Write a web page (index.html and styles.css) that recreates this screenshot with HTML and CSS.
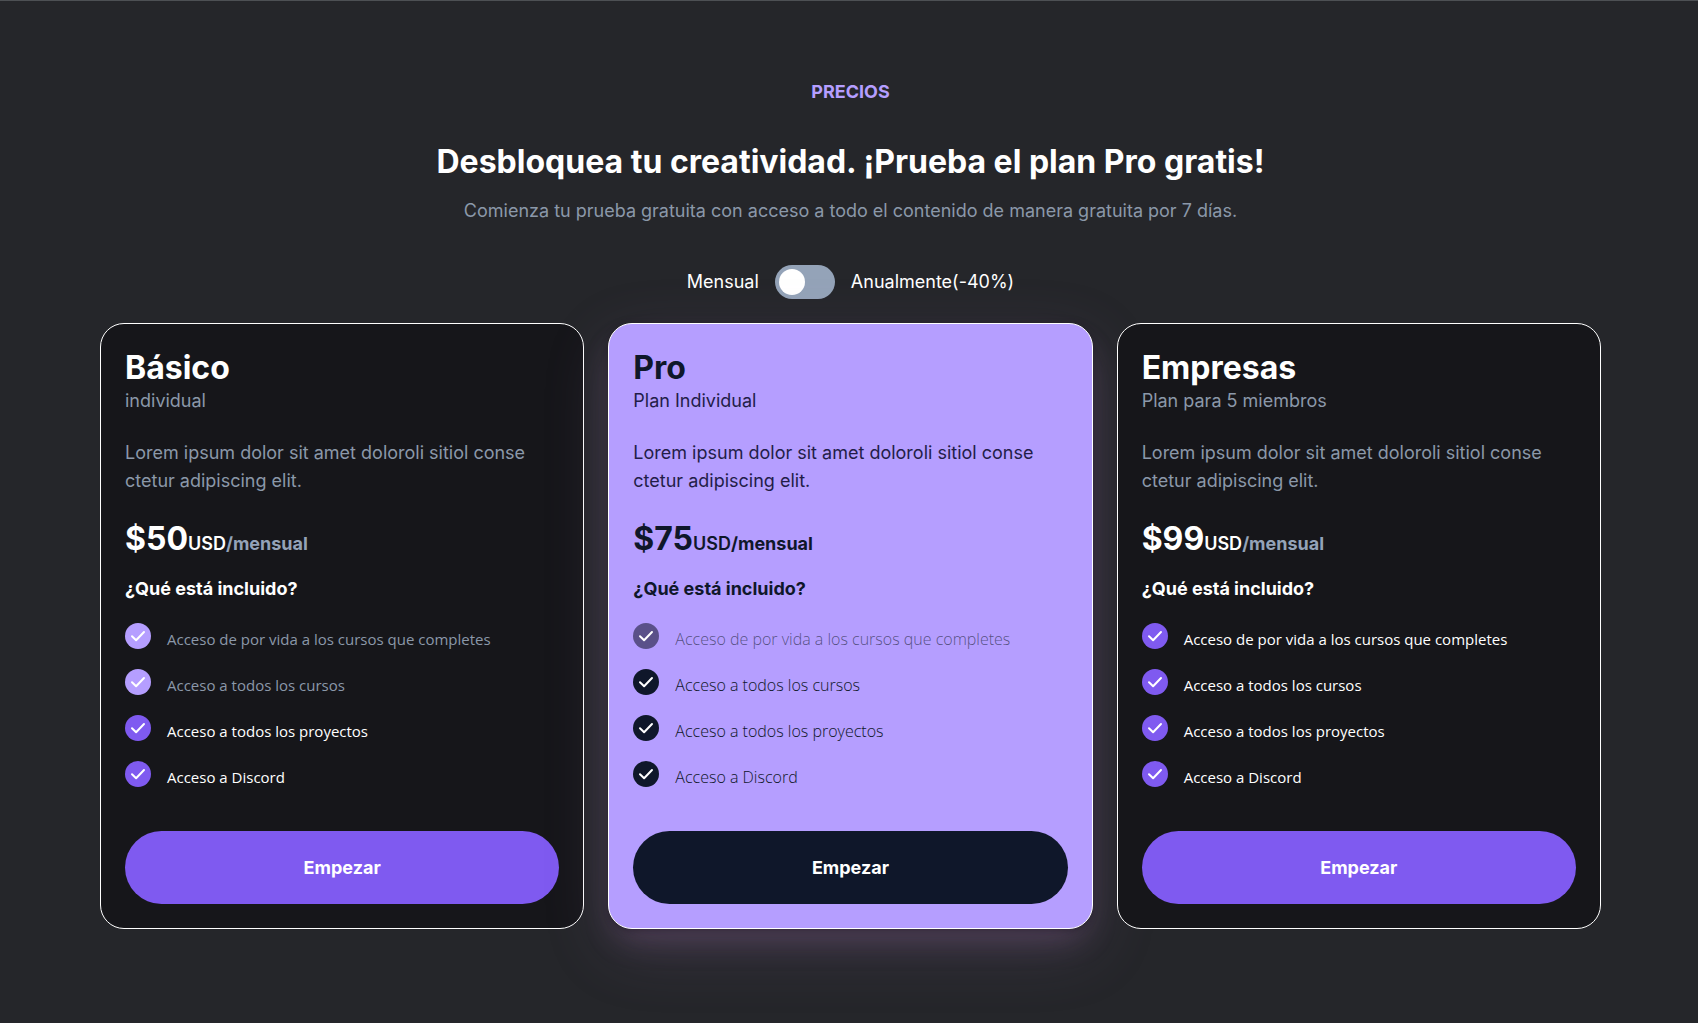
FILE: index.html
```html
<!DOCTYPE html>
<html lang="es">
<head>
<meta charset="utf-8">
<meta name="viewport" content="width=device-width, initial-scale=1">
<title>Precios</title>
<link rel="stylesheet" href="styles.css">
</head>
<body>
<svg class="sprite" aria-hidden="true">
  <symbol id="check" viewBox="0 0 26 26">
    <circle cx="13" cy="13" r="13" fill="currentColor"/>
    <path d="M7 13.3L11.1 17.3L19 9" fill="none" stroke="#fff" stroke-width="2" stroke-linecap="round" stroke-linejoin="round"/>
  </symbol>
</svg>
<main class="pricing">
  <header class="intro">
    <p class="eyebrow">PRECIOS</p>
    <h1 class="headline">Desbloquea tu creatividad. ¡Prueba el plan Pro gratis!</h1>
    <p class="lead">Comienza tu prueba gratuita con acceso a todo el contenido de manera gratuita por 7 días.</p>
  </header>
  <div class="billing">
    <label for="period">Mensual</label>
    <input class="switch" type="checkbox" role="switch" id="period">
    <label for="period">Anualmente(-40%)</label>
  </div>
  <div class="plans">
    <section class="card">
      <h2 class="name">Básico</h2>
      <p class="kind">individual</p>
      <p class="about">Lorem ipsum dolor sit amet doloroli sitiol conse ctetur adipiscing elit.</p>
      <p class="price">$50<span class="currency">USD</span><span class="period">/mensual</span></p>
      <h3 class="included">¿Qué está incluido?</h3>
      <ul class="features">
        <li class="off"><svg class="check"><use href="#check"/></svg><span>Acceso de por vida a los cursos que completes</span></li>
        <li class="off"><svg class="check"><use href="#check"/></svg><span>Acceso a todos los cursos</span></li>
        <li><svg class="check"><use href="#check"/></svg><span>Acceso a todos los proyectos</span></li>
        <li><svg class="check"><use href="#check"/></svg><span>Acceso a Discord</span></li>
      </ul>
      <button class="start" type="button">Empezar</button>
    </section>
    <section class="card pro">
      <h2 class="name">Pro</h2>
      <p class="kind">Plan Individual</p>
      <p class="about">Lorem ipsum dolor sit amet doloroli sitiol conse ctetur adipiscing elit.</p>
      <p class="price">$75<span class="currency">USD</span><span class="period">/mensual</span></p>
      <h3 class="included">¿Qué está incluido?</h3>
      <ul class="features">
        <li class="off"><svg class="check"><use href="#check"/></svg><span>Acceso de por vida a los cursos que completes</span></li>
        <li><svg class="check"><use href="#check"/></svg><span>Acceso a todos los cursos</span></li>
        <li><svg class="check"><use href="#check"/></svg><span>Acceso a todos los proyectos</span></li>
        <li><svg class="check"><use href="#check"/></svg><span>Acceso a Discord</span></li>
      </ul>
      <button class="start" type="button">Empezar</button>
    </section>
    <section class="card">
      <h2 class="name">Empresas</h2>
      <p class="kind">Plan para 5 miembros</p>
      <p class="about">Lorem ipsum dolor sit amet doloroli sitiol conse ctetur adipiscing elit.</p>
      <p class="price">$99<span class="currency">USD</span><span class="period">/mensual</span></p>
      <h3 class="included">¿Qué está incluido?</h3>
      <ul class="features">
        <li><svg class="check"><use href="#check"/></svg><span>Acceso de por vida a los cursos que completes</span></li>
        <li><svg class="check"><use href="#check"/></svg><span>Acceso a todos los cursos</span></li>
        <li><svg class="check"><use href="#check"/></svg><span>Acceso a todos los proyectos</span></li>
        <li><svg class="check"><use href="#check"/></svg><span>Acceso a Discord</span></li>
      </ul>
      <button class="start" type="button">Empezar</button>
    </section>
  </div>
</main>
</body>
</html>
```
FILE: styles.css
```css
*, *::before, *::after { box-sizing: border-box; }

body, h1, h2, h3, p, ul { margin: 0; padding: 0; }

body {
  min-height: 100vh;
  background: #25262a;
  border-top: 1px solid #4d5054;
  color: #fff;
  font: 400 18px/28px Inter, "Liberation Sans", sans-serif;
}

.sprite { display: none; }

.pricing { padding: 77px 97px 48px 100px; }

.intro { text-align: center; }

.eyebrow { color: #b59eff; font-weight: 700; }

.headline {
  margin-top: 36px;
  font-size: 32px;
  font-weight: 700;
  line-height: 40px;
}

.lead {
  margin-top: 15px;
  color: #8b98a9;
}

.billing {
  display: flex;
  justify-content: center;
  align-items: center;
  gap: 16px;
  margin: 40px 0 24px;
}

.switch {
  appearance: none;
  width: 60px;
  height: 34px;
  margin: 0;
  padding: 4px;
  border-radius: 17px;
  background: #94a3b8;
  cursor: pointer;
}

.switch::before {
  content: "";
  display: block;
  width: 26px;
  height: 26px;
  border-radius: 50%;
  background: #fff;
}

.switch:checked { background: #7f5af0; }
.switch:checked::before { margin-left: auto; }

.plans {
  display: grid;
  grid-template-columns: repeat(3, 1fr);
  gap: 24px;
}

.card {
  display: flex;
  flex-direction: column;
  padding: 24px;
  border: 1px solid #fff;
  border-radius: 24px;
  background: #16161a;
}

.name { font-size: 32px; font-weight: 700; line-height: 40px; }

.kind, .about { color: #8b98a9; }

.kind { line-height: 26px; }

.about { margin-top: 25px; }

.price {
  margin-top: 24px;
  font-size: 32px;
  font-weight: 700;
  line-height: 40px;
}

.currency, .period { font-size: 18px; }
.currency { font-weight: 600; }
.period { color: #94a3b8; }

.included { margin-top: 11px; font-size: 18px; font-weight: 700; }

.features {
  display: grid;
  gap: 20px;
  margin: 20px 0 44px;
  list-style: none;
  font: 400 15px/26px "Open Sans", "Noto Sans", sans-serif;
}

.features li { display: flex; gap: 16px; }
.features span { padding-top: 3px; margin-bottom: -3px; }
.check { flex: none; width: 26px; height: 26px; color: #7f5af0; }
.off { color: #8b98a9; }
.off .check { color: #b59eff; }

.start {
  height: 73px;
  border: 0;
  border-radius: 37px;
  background: #7f5af0;
  color: #fff;
  font: 700 18px/28px Inter, "Liberation Sans", sans-serif;
  cursor: pointer;
}

.pro {
  background: #b59eff;
  color: #0f172a;
  box-shadow:
    0 2px 6px rgba(20, 18, 26, 0.4),
    0 16px 32px -8px rgba(181, 120, 190, 0.25),
    0 20px 64px rgba(140, 110, 160, 0.22);
}

.pro .kind, .pro .about { color: #231d48; }
.pro .period { color: inherit; }
.pro .features { font-size: 16px; font-weight: 300; }
.pro .check { color: #0f172a; }
.pro .off { color: rgba(15, 23, 42, 0.6); }
.pro .off .check { color: #5a5089; }
.pro .start { background: #0f172a; }
```
